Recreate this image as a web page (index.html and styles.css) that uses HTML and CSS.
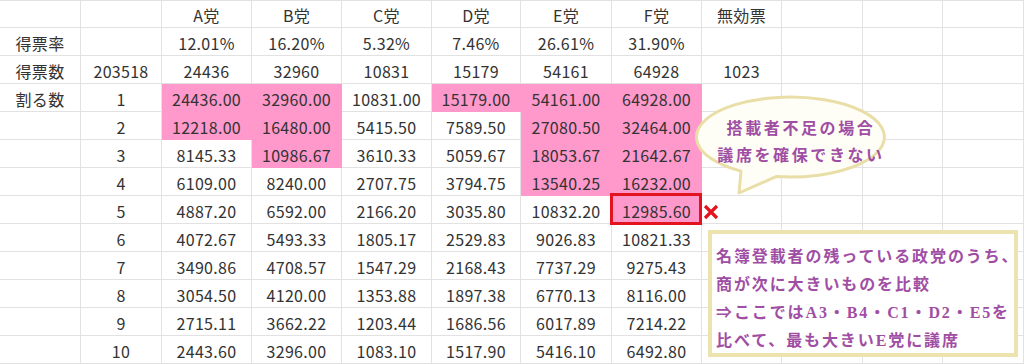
FILE: index.html
```html
<!DOCTYPE html>
<html lang="ja">
<head>
    <meta charset="UTF-8">
    <meta name="viewport" content="width=device-width, initial-scale=1.0">
    <title>ドント方式の議席配分</title>
    <link rel="stylesheet" href="styles.css">
</head>
<body>
<div class="page">
    <div class="sheet">
        <!-- 見出し -->
        <div class="c top"></div><div class="c top"></div><div class="c top">A党</div><div class="c top">B党</div><div class="c top">C党</div><div class="c top">D党</div><div class="c top">E党</div><div class="c top">F党</div><div class="c top">無効票</div><div class="c top"></div><div class="c top"></div><div class="c top"></div>
        <!-- 得票率 -->
        <div class="c">得票率</div><div class="c"></div><div class="c">12.01%</div><div class="c">16.20%</div><div class="c">5.32%</div><div class="c">7.46%</div><div class="c">26.61%</div><div class="c">31.90%</div><div class="c"></div><div class="c"></div><div class="c"></div><div class="c"></div>
        <!-- 得票数 -->
        <div class="c">得票数</div><div class="c">203518</div><div class="c">24436</div><div class="c">32960</div><div class="c">10831</div><div class="c">15179</div><div class="c">54161</div><div class="c">64928</div><div class="c">1023</div><div class="c"></div><div class="c"></div><div class="c"></div>
        <!-- 割る数 1〜10 -->
        <div class="c">割る数</div><div class="c">1</div><div class="c win">24436.00</div><div class="c win">32960.00</div><div class="c">10831.00</div><div class="c win">15179.00</div><div class="c win">54161.00</div><div class="c win">64928.00</div><div class="c"></div><div class="c"></div><div class="c"></div><div class="c"></div>
        <div class="c"></div><div class="c">2</div><div class="c win">12218.00</div><div class="c win">16480.00</div><div class="c">5415.50</div><div class="c">7589.50</div><div class="c win">27080.50</div><div class="c win">32464.00</div><div class="c"></div><div class="c"></div><div class="c"></div><div class="c"></div>
        <div class="c"></div><div class="c">3</div><div class="c">8145.33</div><div class="c win">10986.67</div><div class="c">3610.33</div><div class="c">5059.67</div><div class="c win">18053.67</div><div class="c win">21642.67</div><div class="c"></div><div class="c"></div><div class="c"></div><div class="c"></div>
        <div class="c"></div><div class="c">4</div><div class="c">6109.00</div><div class="c">8240.00</div><div class="c">2707.75</div><div class="c">3794.75</div><div class="c win">13540.25</div><div class="c win">16232.00</div><div class="c"></div><div class="c"></div><div class="c"></div><div class="c"></div>
        <div class="c"></div><div class="c">5</div><div class="c">4887.20</div><div class="c">6592.00</div><div class="c">2166.20</div><div class="c">3035.80</div><div class="c">10832.20</div><div class="c win lost">12985.60</div><div class="c cross"><svg width="16" height="16" viewBox="0 0 16 16"><path d="M2 2 L14 14 M14 2 L2 14" stroke="#e3141f" stroke-width="3.2" fill="none"/></svg></div><div class="c"></div><div class="c"></div><div class="c"></div>
        <div class="c"></div><div class="c">6</div><div class="c">4072.67</div><div class="c">5493.33</div><div class="c">1805.17</div><div class="c">2529.83</div><div class="c">9026.83</div><div class="c">10821.33</div><div class="c"></div><div class="c"></div><div class="c"></div><div class="c"></div>
        <div class="c"></div><div class="c">7</div><div class="c">3490.86</div><div class="c">4708.57</div><div class="c">1547.29</div><div class="c">2168.43</div><div class="c">7737.29</div><div class="c">9275.43</div><div class="c"></div><div class="c"></div><div class="c"></div><div class="c"></div>
        <div class="c"></div><div class="c">8</div><div class="c">3054.50</div><div class="c">4120.00</div><div class="c">1353.88</div><div class="c">1897.38</div><div class="c">6770.13</div><div class="c">8116.00</div><div class="c"></div><div class="c"></div><div class="c"></div><div class="c"></div>
        <div class="c"></div><div class="c">9</div><div class="c">2715.11</div><div class="c">3662.22</div><div class="c">1203.44</div><div class="c">1686.56</div><div class="c">6017.89</div><div class="c">7214.22</div><div class="c"></div><div class="c"></div><div class="c"></div><div class="c"></div>
        <div class="c"></div><div class="c">10</div><div class="c">2443.60</div><div class="c">3296.00</div><div class="c">1083.10</div><div class="c">1517.90</div><div class="c">5416.10</div><div class="c">6492.80</div><div class="c"></div><div class="c"></div><div class="c"></div><div class="c"></div>
    </div>

    <!-- 吹き出し -->
    <div class="bubble">
        <svg class="bubble-shape" width="200" height="106" viewBox="0 0 200 106">
            <path d="M88 84.6 A94 40 0 1 0 53 79.1 L51 101 Z" fill="#fffef6" stroke="#e9dea8" stroke-width="3" stroke-linejoin="round"/>
        </svg>
        <div class="bubble-text">搭載者不足の場合<br>議席を確保できない</div>
    </div>

    <!-- 説明 -->
    <div class="note">
        名簿登載者の残っている政党のうち、<br>
        商が次に大きいものを比較<br>
        ⇒ここではA3・B4・C1・D2・E5を<br>
        比べて、最も大きいE党に議席
    </div>
</div>
</body>
</html>
```

FILE: styles.css
```css
body {
    margin: 0;
    background: #fff;
    font-family: "Noto Sans CJK JP", "Noto Sans", sans-serif;
    color: #333;
}
.page {
    position: relative;
    width: 1024px;
    height: 364px;
    overflow: hidden;
}
.sheet {
    display: grid;
    grid-template-columns: 81px 81px 90px 90px 90px 89px 91px 90px 80px 81px 80px 1fr;
    grid-auto-rows: 28px;
}
.c {
    box-sizing: border-box;
    border-right: 1px solid #e2e2e2;
    border-bottom: 1px solid #e2e2e2;
    display: flex;
    align-items: center;
    justify-content: center;
    padding-top: 2px;
    font-size: 16px;
    letter-spacing: 0.3px;
    white-space: nowrap;
}
.c.top {
    box-shadow: inset 0 1px #e2e2e2;
}
.c.win {
    background-color: #ff99cc;
    border-color: #ff99cc;
}
.c.lost {
    position: relative;
}
.c.lost::after {
    content: "";
    position: absolute;
    top: -3px;
    left: -2px;
    right: -1px;
    bottom: -2px;
    border: 3px solid #e3141f;
}
.c.cross {
    justify-content: flex-start;
    padding: 4px 0 0 1px;
}
.bubble {
    position: absolute;
    left: 688px;
    top: 92px;
    width: 200px;
    height: 106px;
}
.bubble-shape {
    position: absolute;
    left: 0;
    top: 0;
}
.bubble-text {
    position: relative;
    padding-top: 23px;
    padding-left: 26px;
    text-align: center;
    font-family: "Liberation Serif", "Noto Sans CJK JP", serif;
    font-weight: bold;
    font-size: 16px;
    line-height: 27px;
    letter-spacing: 2.6px;
    color: #a04ea4;
    white-space: nowrap;
}
.note {
    position: absolute;
    left: 708px;
    top: 230px;
    width: 310px;
    height: 127px;
    box-sizing: border-box;
    border: 4px solid #ede3ae;
    background: #fff;
    padding: 9px 0 0 4px;
    font-family: "Liberation Serif", "Noto Sans CJK JP", serif;
    font-weight: bold;
    font-size: 16px;
    line-height: 28px;
    letter-spacing: 1.9px;
    color: #a04ea4;
    white-space: nowrap;
}
```
